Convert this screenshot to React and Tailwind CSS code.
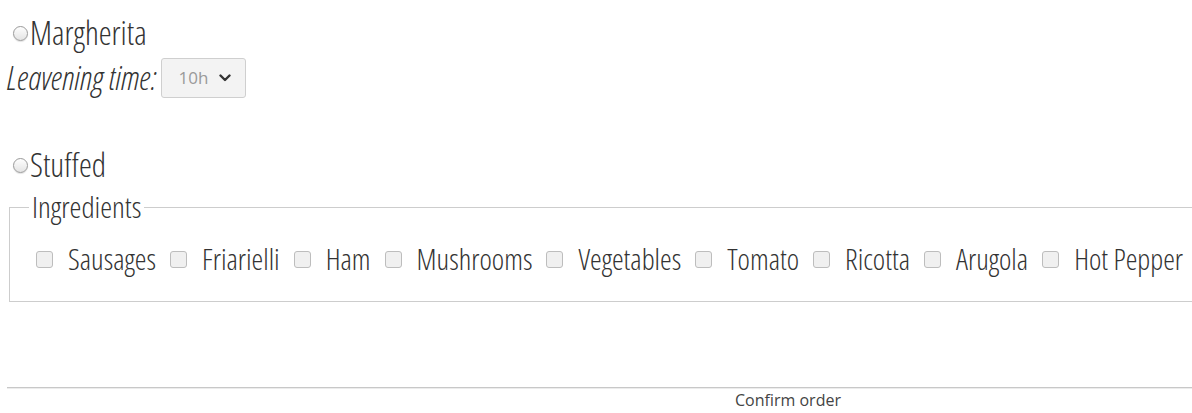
import React from 'react';

const ingredients = ['Sausages', 'Friarielli', 'Ham', 'Mushrooms', 'Vegetables', 'Tomato', 'Ricotta', 'Arugola', 'Hot Pepper'];

const condensed = { fontFamily: '"Open Sans", sans-serif', fontStretch: '75%', fontWeight: 300 };
const regular = { fontFamily: '"Open Sans", sans-serif', fontStretch: '100%', fontWeight: 400 };

function Radio() {
  return (
    <span className="block shrink-0 w-[15px] h-[15px] rounded-full border border-[#9a9a9a] bg-gradient-to-b from-[#fefefe] to-[#e4e4e4] shadow-[0_1px_1px_rgba(0,0,0,0.12)]" />
  );
}

function Checkbox() {
  return <span className="block shrink-0 w-[17px] h-[17px] rounded-[3px] border border-[#bdbdbd] bg-[#f0f0f0]" />;
}

export default function App() {
  return (
    <div className="w-full overflow-hidden bg-white">
      <div className="w-[1569px] pt-[18px] pl-[7px] text-[#333]" style={condensed}>
        <div className="h-[30px] flex items-center text-[32.5px]">
          <span className="ml-[6px] mr-[2px]"><Radio /></span>
          <span className="leading-[30px]">Margherita</span>
        </div>

        <div className="mt-[10px] h-[40px] flex items-center text-[32.5px]">
          <span className="italic leading-[30px]">Leavening time:</span>
          <div className="ml-[5px] w-[85px] h-[40px] flex items-center border border-[#cfcfcf] rounded-[3px] bg-[#f3f3f3]">
            <span className="ml-[16px] text-[17px] leading-[20px] text-[#9a9a9a]" style={regular}>10h</span>
            <svg className="ml-[11px]" width="12" height="8" viewBox="0 0 12 8" fill="none">
              <path d="M1.5 1.5 L6 6 L10.5 1.5" stroke="#333" strokeWidth="2.4" strokeLinecap="round" strokeLinejoin="round" />
            </svg>
          </div>
        </div>

        <div className="mt-[52px] h-[30px] flex items-center text-[32.5px]">
          <span className="ml-[6px] mr-[2px]"><Radio /></span>
          <span className="leading-[30px]">Stuffed</span>
        </div>

        <fieldset className="mt-[12px] ml-[2px] w-[1700px] border border-[#cdcdcd] pl-[19px] pb-[27px] text-[29.5px]">
          <legend className="px-[3px] leading-[30px] text-[30px]">Ingredients</legend>
          <div className="mt-[22px] pl-[7px] h-[30px] flex items-center">
            {ingredients.map((name) => (
              <label key={name} className="flex items-center mr-[14px]">
                <Checkbox />
                <span className="ml-[15px] leading-[30px]">{name}</span>
              </label>
            ))}
          </div>
        </fieldset>

        <hr className="mt-[85px] border-t border-b border-t-[#c8c8c8] border-b-[#ececec]" />
        <div className="mt-[1px] text-center text-[16px] leading-[20px] text-[#444]" style={regular}>
          Confirm order
        </div>
      </div>
    </div>
  );
}
